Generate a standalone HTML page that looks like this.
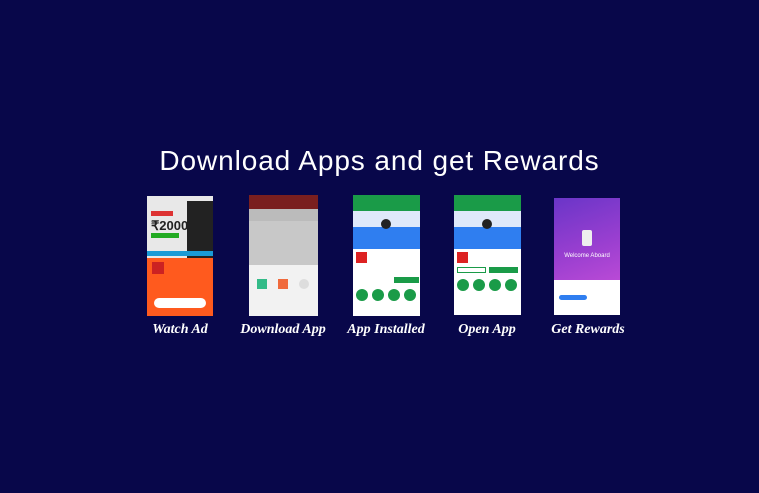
<!DOCTYPE html>
<html><head><meta charset="utf-8"><style>
*{margin:0;padding:0;box-sizing:border-box}
body{width:759px;height:493px;background:#08074a;position:relative;overflow:hidden;font-family:"Liberation Sans",sans-serif}
.t{position:absolute;left:0;width:759px;top:145px;text-align:center;color:#fff;font-size:28px;letter-spacing:0.9px}
.p{position:absolute;overflow:hidden;background:#fff}
.l{position:absolute;top:322px;color:#fff;font-family:"Liberation Serif",serif;font-style:italic;font-weight:bold;font-size:14px;text-align:center;width:110px}
.a{position:absolute}
</style></head><body>
<div class="t">Download Apps and get Rewards</div>

<div class="p" style="left:147px;top:196px;width:66px;height:120px;background:#ff5a1e">
 <div class="a" style="left:0;top:0;width:66px;height:62px;background:#e8e8e8"></div>
 <div class="a" style="left:40px;top:5px;width:26px;height:57px;background:#222"></div>
 <div class="a" style="left:4px;top:15px;width:22px;height:5px;background:#d33"></div>
 <div class="a" style="left:4px;top:22px;font-size:13px;font-weight:bold;color:#222">₹2000</div>
 <div class="a" style="left:4px;top:37px;width:28px;height:5px;background:#2a2"></div>
 <div class="a" style="left:0;top:55px;width:66px;height:5px;background:#1a9ad6"></div>
 <div class="a" style="left:5px;top:66px;width:12px;height:12px;background:#c22"></div>
 <div class="a" style="left:7px;top:102px;width:52px;height:10px;border-radius:5px;background:#fff"></div>
</div>
<div class="l" style="left:125px">Watch Ad</div>

<div class="p" style="left:249px;top:195px;width:69px;height:121px;background:#c8c8c8">
 <div class="a" style="left:0;top:0;width:69px;height:14px;background:#7a1f1f"></div>
 <div class="a" style="left:0;top:14px;width:69px;height:12px;background:#bbb"></div>
 <div class="a" style="left:0;top:70px;width:69px;height:51px;background:#f2f2f2"></div>
 <div class="a" style="left:8px;top:84px;width:10px;height:10px;background:#3b8"></div>
 <div class="a" style="left:29px;top:84px;width:10px;height:10px;background:#f06a3c"></div>
 <div class="a" style="left:50px;top:84px;width:10px;height:10px;border-radius:5px;background:#ddd"></div>
</div>
<div class="l" style="left:228px">Download App</div>

<div class="p" style="left:353px;top:195px;width:67px;height:121px">
 <div class="a" style="left:0;top:0;width:67px;height:16px;background:#1a9b48"></div>
 <div class="a" style="left:0;top:16px;width:67px;height:38px;background:#dfe9fa"></div>
 <div class="a" style="left:0;top:32px;width:67px;height:22px;background:#2f7ef0"></div>
 <div class="a" style="left:28px;top:24px;width:10px;height:10px;border-radius:5px;background:#222"></div>
 <div class="a" style="left:3px;top:57px;width:11px;height:11px;background:#d22"></div>
 <div class="a" style="left:41px;top:82px;width:25px;height:6px;background:#1a9b48"></div>
 <div class="a" style="left:3px;top:94px;width:12px;height:12px;border-radius:6px;background:#1a9b48"></div>
 <div class="a" style="left:19px;top:94px;width:12px;height:12px;border-radius:6px;background:#1a9b48"></div>
 <div class="a" style="left:35px;top:94px;width:12px;height:12px;border-radius:6px;background:#1a9b48"></div>
 <div class="a" style="left:51px;top:94px;width:12px;height:12px;border-radius:6px;background:#1a9b48"></div>
</div>
<div class="l" style="left:331px">App Installed</div>

<div class="p" style="left:454px;top:195px;width:67px;height:120px">
 <div class="a" style="left:0;top:0;width:67px;height:16px;background:#1a9b48"></div>
 <div class="a" style="left:0;top:16px;width:67px;height:38px;background:#dfe9fa"></div>
 <div class="a" style="left:0;top:32px;width:67px;height:22px;background:#2f7ef0"></div>
 <div class="a" style="left:28px;top:24px;width:10px;height:10px;border-radius:5px;background:#222"></div>
 <div class="a" style="left:3px;top:57px;width:11px;height:11px;background:#d22"></div>
 <div class="a" style="left:3px;top:72px;width:29px;height:6px;border:1px solid #1a9b48"></div>
 <div class="a" style="left:35px;top:72px;width:29px;height:6px;background:#1a9b48"></div>
 <div class="a" style="left:3px;top:84px;width:12px;height:12px;border-radius:6px;background:#1a9b48"></div>
 <div class="a" style="left:19px;top:84px;width:12px;height:12px;border-radius:6px;background:#1a9b48"></div>
 <div class="a" style="left:35px;top:84px;width:12px;height:12px;border-radius:6px;background:#1a9b48"></div>
 <div class="a" style="left:51px;top:84px;width:12px;height:12px;border-radius:6px;background:#1a9b48"></div>
</div>
<div class="l" style="left:432px">Open App</div>

<div class="p" style="left:554px;top:198px;width:66px;height:117px">
 <div class="a" style="left:0;top:0;width:66px;height:82px;background:linear-gradient(160deg,#6a35c8,#9a3fd0 60%,#b94ad6)"></div>
 <div class="a" style="left:28px;top:32px;width:10px;height:16px;background:#eee;border-radius:2px"></div>
 <div class="a" style="left:7px;top:55px;width:52px;font-size:6px;color:#fff;text-align:center">Welcome Aboard</div>
 <div class="a" style="left:5px;top:97px;width:28px;height:5px;background:#2f7ef0;border-radius:3px"></div>
</div>
<div class="l" style="left:533px">Get Rewards</div>
</body></html>
